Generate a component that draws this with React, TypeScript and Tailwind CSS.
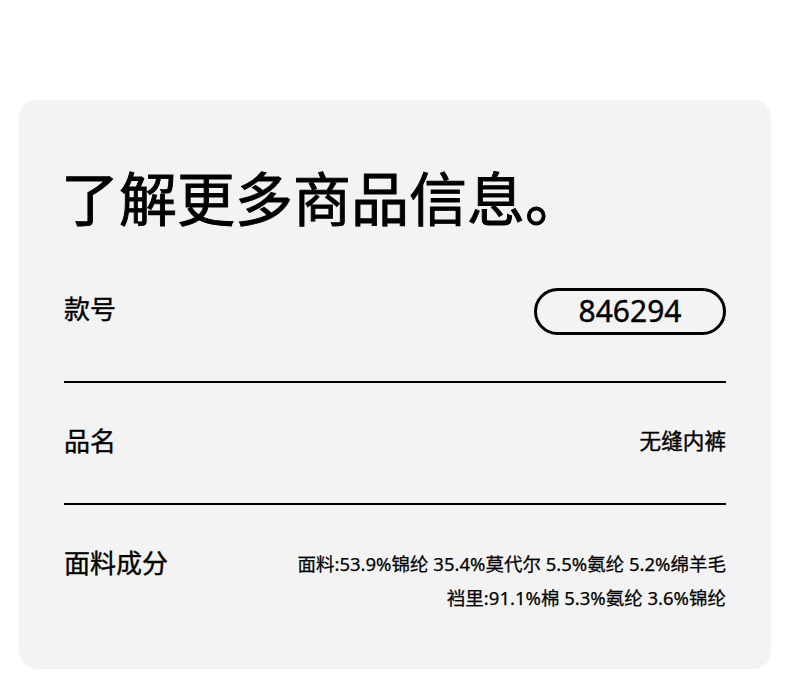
export default function App() {
  return (
    <div
      className="w-[790px] h-[674px] bg-white pt-[100px] pl-[19px]"
      style={{ fontFamily: '"Noto Sans CJK SC", "Noto Sans", sans-serif' }}
    >
      <div className="w-[752px] h-[569px] bg-[#f3f3f3] rounded-[18px] pl-[45px] pr-[45px] pt-[67px] text-black">
        <h1 className="text-[58px] leading-none font-normal -ml-[3px] [-webkit-text-stroke:0.9px_black]">
          了解更多商品信息。
        </h1>

        <div className="mt-[62px] flex items-center justify-between h-[48px]">
          <span className="text-[26px] leading-none -mt-[6px] [-webkit-text-stroke:0.4px_black]">款号</span>
          <div className="w-[192px] h-[47px] border-[3px] border-black rounded-full flex items-center justify-center text-[30px] leading-none font-['Noto_Sans',sans-serif] [-webkit-text-stroke:0.4px_black]">
            846294
          </div>
        </div>

        <div className="mt-[46px] h-[2px] bg-black" />

        <div className="mt-[44px] flex items-center justify-between [-webkit-text-stroke:0.4px_black]">
          <span className="text-[26px] leading-none">品名</span>
          <span className="text-[21.6px] leading-none">无缝内裤</span>
        </div>

        <div className="mt-[50px] h-[2px] bg-black" />

        <div className="mt-[40px] flex justify-between">
          <span className="text-[26px] leading-none mt-[4px] [-webkit-text-stroke:0.4px_black]">面料成分</span>
          <div className="text-right text-[18.5px] leading-[34px] mt-[2px] font-['Noto_Sans','Noto_Sans_CJK_SC',sans-serif] [-webkit-text-stroke:0.25px_black]">
            <p>面料:53.9%锦纶 35.4%莫代尔 5.5%氨纶 5.2%绵羊毛</p>
            <p>裆里:91.1%棉 5.3%氨纶 3.6%锦纶</p>
          </div>
        </div>
      </div>
    </div>
  );
}
